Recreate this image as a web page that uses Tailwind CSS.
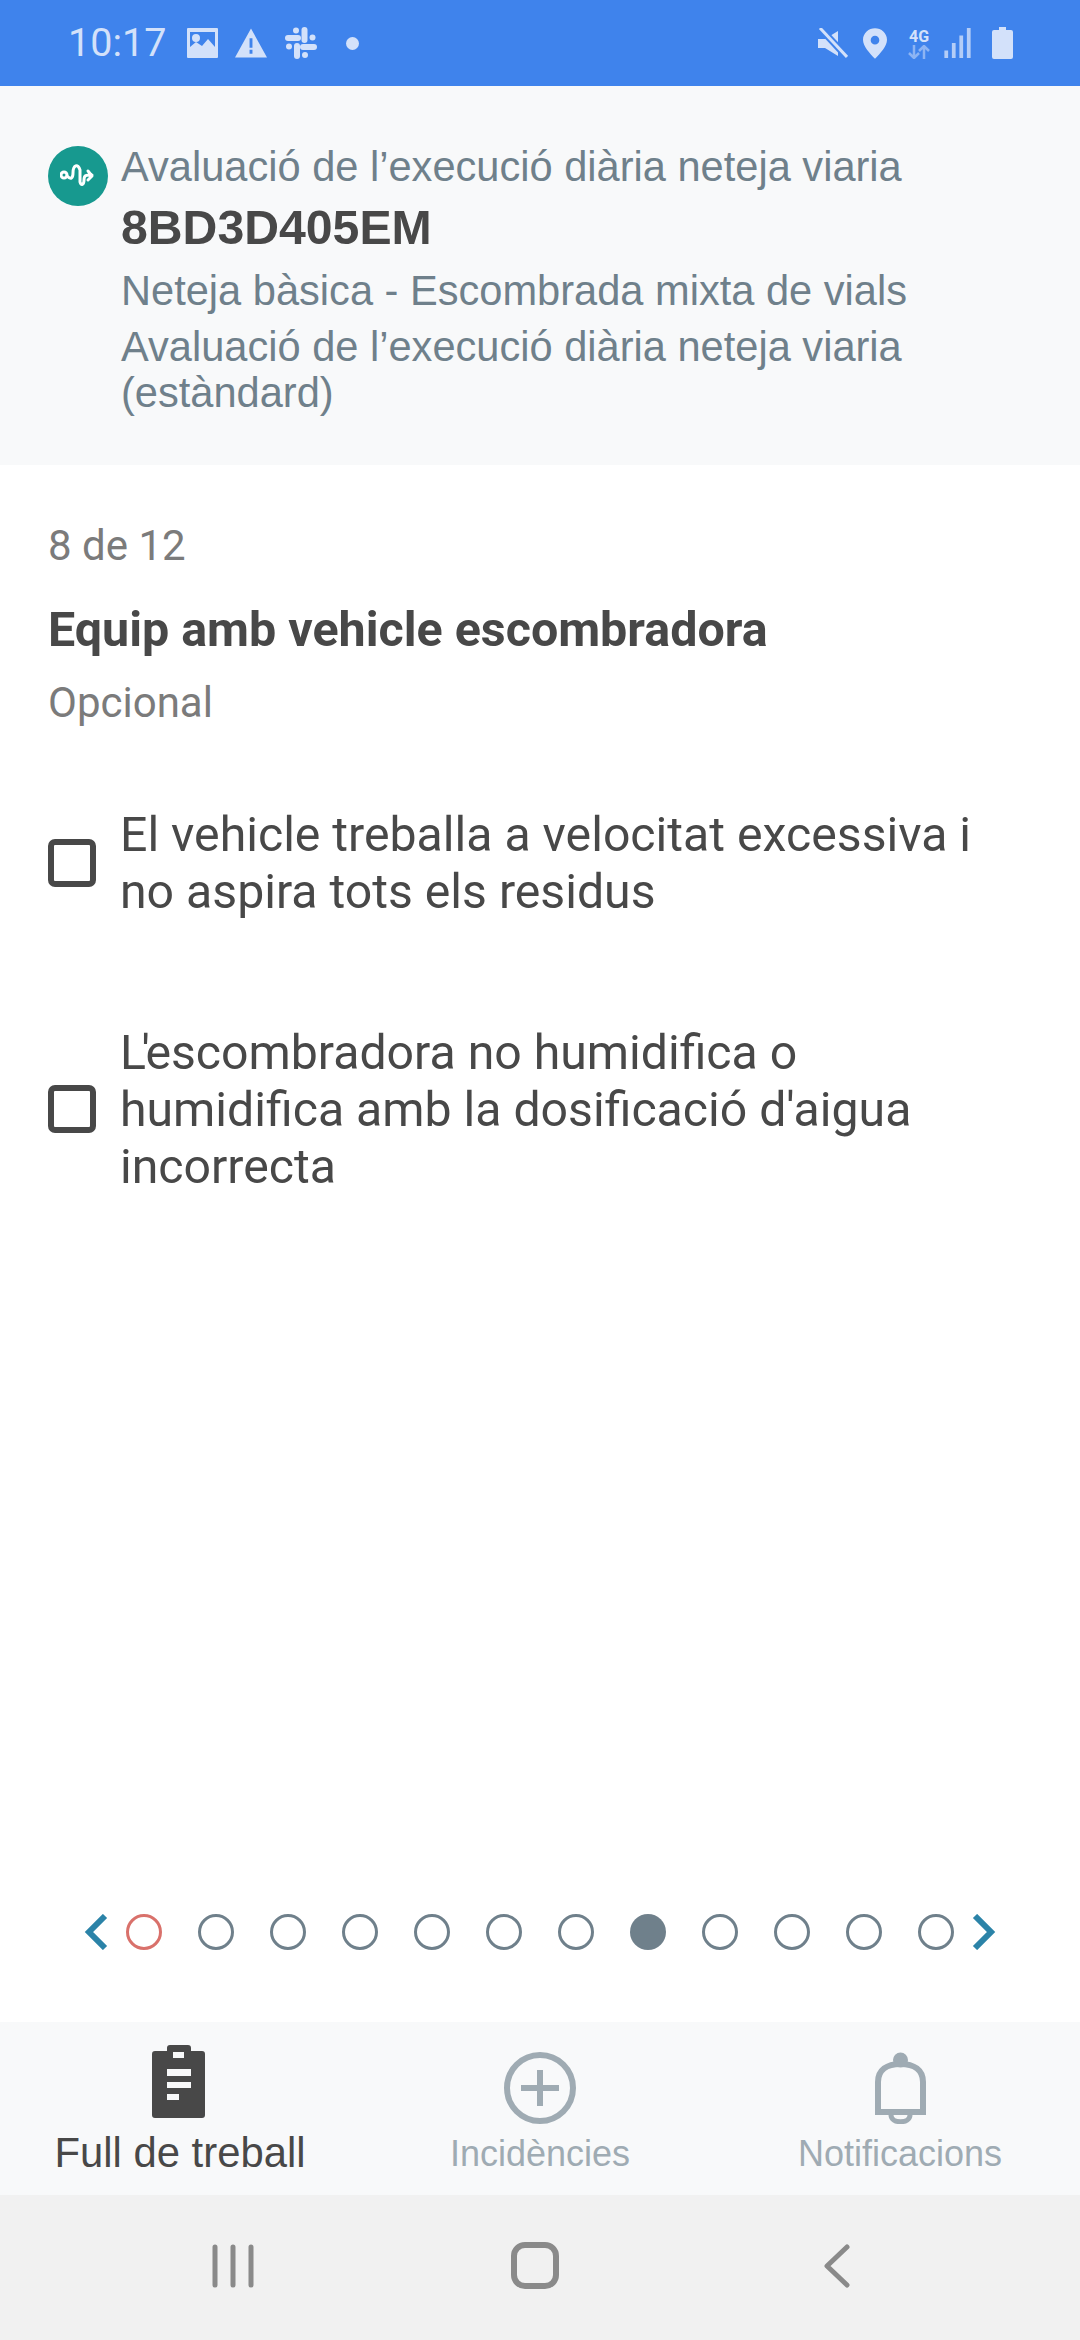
<!DOCTYPE html>
<html lang="ca">
<head>
    <meta charset="UTF-8">
    <meta name="viewport" content="width=device-width, initial-scale=1.0">
    <title>Full de treball</title>
    <script src="https://cdn.jsdelivr.net/npm/@tailwindcss/browser@4"></script>
</head>
<body class="w-[1080px] h-[2340px] flex flex-col bg-white overflow-hidden font-['Roboto',sans-serif]">
    <!-- Status bar -->
    <div class="h-[86px] shrink-0 bg-[#3f83ec] flex items-center justify-between pl-[68px] pr-[67px] text-[#d3e1fa]">
        <div class="flex items-center">
            <span class="text-[39.500px] leading-none mr-[21px]">10:17</span>
            <svg class="w-[31px] h-[30px] mr-[17px]" viewBox="0 0 31 30"><path fill="#d3e1fa" fill-rule="evenodd" d="M1 0h29a1 1 0 0 1 1 1v28a1 1 0 0 1-1 1H1a1 1 0 0 1-1-1V1a1 1 0 0 1 1-1zm2 4v15l6-5 6 4 6-7 7 8V4zm6 2a4 4 0 1 1 0 8 4 4 0 0 1 0-8z"/></svg>
            <svg class="w-[32px] h-[30px] mr-[18px]" viewBox="0 0 33 30"><path fill="#d3e1fa" fill-rule="evenodd" d="M16.500 0L33 30H0zM15 10v10h3V10zm0 12v4h3v-4z"/></svg>
            <svg class="w-[32px] h-[32px] mr-[29px]" viewBox="0 0 32 32" fill="#d3e1fa"><rect x="16.500" y="0" width="6" height="16" rx="3"/><rect x="0" y="8" width="16" height="6" rx="3"/><rect x="15" y="17" width="17" height="6" rx="3"/><rect x="9" y="16" width="6" height="16" rx="3"/><circle cx="11" cy="3.500" r="3"/><circle cx="27.500" cy="10.500" r="3"/><circle cx="20" cy="28" r="3"/><circle cx="4" cy="19.500" r="3"/></svg>
            <span class="w-[13px] h-[13px] rounded-full bg-[#d3e1fa]"></span>
        </div>
        <div class="flex items-center">
            <svg class="w-[30px] h-[31px] mr-[15px]" viewBox="0 0 30 31"><path fill="#d3e1fa" d="M0 11h7L20 3v25l-13-8H0z"/><path stroke="#3f83ec" stroke-width="7" d="M2 0l27 29"/><path stroke="#d3e1fa" stroke-width="3" d="M2 0l27 29"/></svg>
            <svg class="w-[24px] h-[31px] mr-[20px]" viewBox="0 0 25 32"><path fill="#d3e1fa" fill-rule="evenodd" d="M12.500 0C19 0 25 5 25 12c0 7-7 14-12.500 20C7 26 0 19 0 12 0 5 6 0 12.500 0zm0 8a4.500 4.500 0 1 0 0 9 4.500 4.500 0 0 0 0-9z"/></svg>
            <div class="w-[24px] flex flex-col items-center mr-[13px]">
                <span class="text-[16px] leading-[17px] font-bold">4G</span>
                <svg class="w-[22px] h-[14px]" viewBox="0 0 22 14" fill="none" stroke="#8db4f3" stroke-width="2.500"><path d="M6 0v12M1 8l5 5 5-5M16 14V2M11 6l5-5 5 5"/></svg>
            </div>
            <svg class="w-[27px] h-[30px] mr-[21px]" viewBox="0 0 28 32" fill="#b4cdf7"><rect x="0" y="24" width="4" height="8"/><rect x="8" y="16" width="4" height="16"/><rect x="16" y="8" width="4" height="24"/><rect x="24" y="0" width="4" height="32"/></svg>
            <svg class="w-[21px] h-[32px]" viewBox="0 0 21 32"><path fill="#d3e1fa" d="M7 0h7v3h5a2 2 0 0 1 2 2v25a2 2 0 0 1-2 2H2a2 2 0 0 1-2-2V5a2 2 0 0 1 2-2h5z"/></svg>
        </div>
    </div>

    <!-- Header -->
    <div class="h-[379px] shrink-0 bg-[#f8f9fa] flex pl-[48px] pr-[40px] pt-[60px] font-['Liberation_Sans',sans-serif]">
        <div class="w-[60px] h-[60px] mr-[13px] shrink-0 rounded-full bg-[#17998f] flex items-center justify-center">
            <svg class="w-[36px] h-[28px]" viewBox="0 0 36 28" fill="none" stroke="#fff" stroke-width="3" stroke-linecap="round" stroke-linejoin="round"><circle cx="4" cy="13" r="3"/><path d="M7 14c4 4 6 2 6-3 0-8 5-10 7-3v12c1 4 4 3 4-2 0-5 2-5 8-5M28 9l4 5-4 4"/></svg>
        </div>
        <div class="flex flex-col text-[#6f808b] text-[41.600px] leading-[46px]">
            <span class="h-[46px] mt-[-2px]">Avaluació de l’execució diària neteja viaria</span>
            <span class="text-[#484848] font-bold text-[48.200px] leading-[50px] mt-[12px]">8BD3D405EM</span>
            <span class="mt-[16px]">Neteja bàsica - Escombrada mixta de vials</span>
            <span class="mt-[10px]">Avaluació de l’execució diària neteja viaria (estàndard)</span>
        </div>
    </div>

    <!-- Question -->
    <div class="flex-1 flex flex-col px-[48px] pt-[58px]">
        <span class="text-[42px] leading-[46px] text-[#7b7b7b]">8 de 12</span>
        <span class="text-[48.400px] leading-[52px] font-bold text-[#484848] mt-[35px]">Equip amb vehicle escombradora</span>
        <span class="text-[42px] leading-[46px] text-[#7b7b7b] mt-[24px]">Opcional</span>

        <div class="flex items-center gap-[24px] mt-[80px] pr-[32px]">
            <span class="w-[48px] h-[48px] shrink-0 rounded-[7px] border-[6px] border-[#484848]"></span>
            <span class="text-[48.200px] leading-[57px] text-[#484848]">El vehicle treballa a velocitat excessiva i no aspira tots els residus</span>
        </div>
        <div class="flex items-center gap-[24px] mt-[104px] pr-[32px]">
            <span class="w-[48px] h-[48px] shrink-0 rounded-[7px] border-[6px] border-[#484848] mb-[2px]"></span>
            <span class="text-[48.200px] leading-[57px] text-[#484848]"><span class="tracking-[-4.500px]">L'</span>escombradora no humidifica o humidifica amb la dosificació d'aigua incorrecta</span>
        </div>

        <!-- Pager -->
        <div class="mt-auto mb-[72px] h-[36px] flex items-center">
            <svg class="w-[24px] h-[36px] ml-[36px] mr-[18px]" viewBox="0 0 24 36" fill="none" stroke="#2b83a8" stroke-width="6"><path d="M21 2L5 18l16 16"/></svg>
            <div class="flex gap-[36px]">
                <span class="w-[36px] h-[36px] rounded-full border-[3.500px] border-[#d9716b]"></span>
                <span class="w-[36px] h-[36px] rounded-full border-[3.500px] border-[#6f808b]"></span>
                <span class="w-[36px] h-[36px] rounded-full border-[3.500px] border-[#6f808b]"></span>
                <span class="w-[36px] h-[36px] rounded-full border-[3.500px] border-[#6f808b]"></span>
                <span class="w-[36px] h-[36px] rounded-full border-[3.500px] border-[#6f808b]"></span>
                <span class="w-[36px] h-[36px] rounded-full border-[3.500px] border-[#6f808b]"></span>
                <span class="w-[36px] h-[36px] rounded-full border-[3.500px] border-[#6f808b]"></span>
                <span class="w-[36px] h-[36px] rounded-full bg-[#6f808b]"></span>
                <span class="w-[36px] h-[36px] rounded-full border-[3.500px] border-[#6f808b]"></span>
                <span class="w-[36px] h-[36px] rounded-full border-[3.500px] border-[#6f808b]"></span>
                <span class="w-[36px] h-[36px] rounded-full border-[3.500px] border-[#6f808b]"></span>
                <span class="w-[36px] h-[36px] rounded-full border-[3.500px] border-[#6f808b]"></span>
            </div>
            <svg class="w-[24px] h-[36px] ml-[18px]" viewBox="0 0 24 36" fill="none" stroke="#2b83a8" stroke-width="6"><path d="M3 2l16 16L3 34"/></svg>
        </div>
    </div>

    <!-- Bottom tabs -->
    <div class="h-[173px] shrink-0 bg-[#f8f9fa] grid grid-cols-3 font-['Liberation_Sans',sans-serif]">
        <div class="flex flex-col items-center pt-[23px] text-[#484848]">
            <svg class="w-[53px] h-[73px] mr-[3px]" viewBox="0 0 53 73"><path fill="#484848" fill-rule="evenodd" d="M15 6V3a3 3 0 0 1 3-3h18a3 3 0 0 1 3 3v3h11a3 3 0 0 1 3 3v61a3 3 0 0 1-3 3H3a3 3 0 0 1-3-3V9a3 3 0 0 1 3-3zm6 1v6h11V7zM15 24v7h24v-7zm0 13v6h24v-6zm0 12v6h12v-6z"/></svg>
            <span class="text-[41.800px] leading-[48px] mt-[11px]">Full de treball</span>
        </div>
        <div class="flex flex-col items-center pt-[30px] text-[#9fabb3]">
            <svg class="w-[72px] h-[72px]" viewBox="0 0 72 72" fill="none" stroke="#9fabb3"><circle cx="36" cy="36" r="33" stroke-width="6"/><path stroke-width="6" d="M36 18v36M17 36h38"/></svg>
            <span class="text-[36px] leading-[42px] mt-[9px]">Incidències</span>
        </div>
        <div class="flex flex-col items-center pt-[30px] text-[#9fabb3]">
            <svg class="w-[51px] h-[72px]" viewBox="0 0 51 72" fill="none" stroke="#9fabb3" stroke-width="6"><circle cx="25.500" cy="8" r="7.500" fill="#9fabb3" stroke="none"/><path d="M3 60V30C3 18 12 12 25.500 12S48 18 48 30V60Z"/><path stroke-width="5" d="M16 63c0 9 19 9 19 0"/></svg>
            <span class="text-[36px] leading-[42px] mt-[9px]">Notificacions</span>
        </div>
    </div>

    <!-- Android nav -->
    <div class="h-[145px] shrink-0 bg-[#f1f1f1] flex items-center pl-[212px] pb-[4px]">
        <svg class="w-[42px] h-[44px]" viewBox="0 0 42 44" fill="none" stroke="#8a8a8a" stroke-width="5" stroke-linecap="round"><path d="M3 3v38M21 3v38M39 3v38"/></svg>
        <span class="w-[48px] h-[47px] ml-[257px] rounded-[14px] border-[6px] border-[#8a8a8a]"></span>
        <svg class="w-[26px] h-[44px] ml-[265px]" viewBox="0 0 26 44" fill="none" stroke="#8a8a8a" stroke-width="5" stroke-linecap="round" stroke-linejoin="round"><path d="M23 3L3 22l20 19"/></svg>
    </div>
</body>
</html>
